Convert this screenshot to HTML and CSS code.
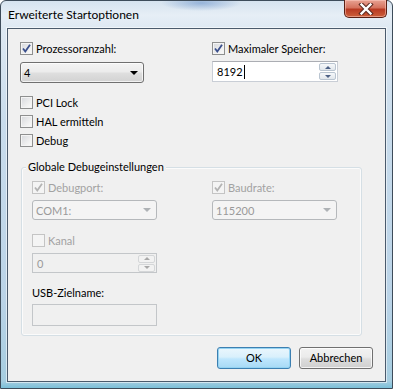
FILE: index.html
```html
<!DOCTYPE html>
<html lang="de">
<head>
    <meta charset="UTF-8">
    <title>Erweiterte Startoptionen</title>
    <link rel="stylesheet" href="styles.css">
</head>
<body>
    <div class="window">
        <div class="titlebar">
            <span class="title">Erweiterte Startoptionen</span>
            <div class="close-btn">
                <svg width="16" height="12" viewBox="0 0 16 12">
                    <path d="M3.5 1.5 L12.5 10.5 M12.5 1.5 L3.5 10.5" stroke="#5a2a22" stroke-width="4.4" stroke-linecap="square"/>
                    <path d="M3.5 1.5 L12.5 10.5 M12.5 1.5 L3.5 10.5" stroke="#ffffff" stroke-width="2.4" stroke-linecap="square"/>
                </svg>
            </div>
        </div>

        <div class="client">
            <div class="top-row">
                <div class="field">
                    <div class="check">
                        <span class="box"><svg width="11" height="11" viewBox="0 0 11 11"><path d="M2 5.5 L4.3 8.5 L9 1.8" class="tick"/></svg></span>
                        Prozessoranzahl:
                    </div>
                    <div class="combo">
                        <span>4</span>
                        <span class="arrow"></span>
                    </div>
                </div>
                <div class="field">
                    <div class="check">
                        <span class="box"><svg width="11" height="11" viewBox="0 0 11 11"><path d="M2 5.5 L4.3 8.5 L9 1.8" class="tick"/></svg></span>
                        Maximaler Speicher:
                    </div>
                    <div class="spin">
                        <span class="spin-text">8192<span class="caret"></span></span>
                        <div class="spin-btns">
                            <span class="spin-btn"><span class="up"></span></span>
                            <span class="spin-btn"><span class="down"></span></span>
                        </div>
                    </div>
                </div>
            </div>

            <div class="options">
                <div class="check"><span class="box"></span>PCI Lock</div>
                <div class="check"><span class="box"></span>HAL ermitteln</div>
                <div class="check"><span class="box"></span>Debug</div>
            </div>

            <div class="group">
                <span class="group-title">Globale Debugeinstellungen</span>
                <div class="group-grid">
                    <div class="field">
                        <div class="check disabled">
                            <span class="box"><svg width="11" height="11" viewBox="0 0 11 11"><path d="M2 5.5 L4.3 8.5 L9 1.8" class="tick"/></svg></span>
                            Debugport:
                        </div>
                        <div class="combo disabled">
                            <span>COM1:</span>
                            <span class="arrow"></span>
                        </div>
                    </div>
                    <div class="field">
                        <div class="check disabled">
                            <span class="box"><svg width="11" height="11" viewBox="0 0 11 11"><path d="M2 5.5 L4.3 8.5 L9 1.8" class="tick"/></svg></span>
                            Baudrate:
                        </div>
                        <div class="combo disabled">
                            <span>115200</span>
                            <span class="arrow"></span>
                        </div>
                    </div>
                    <div class="field kanal">
                        <div class="check disabled"><span class="box"></span>Kanal</div>
                        <div class="spin disabled">
                            <span class="spin-text">0</span>
                            <div class="spin-btns">
                                <span class="spin-btn"><span class="up"></span></span>
                                <span class="spin-btn"><span class="down"></span></span>
                            </div>
                        </div>
                    </div>
                    <div></div>
                    <div class="field usb">
                        <div class="label">USB-Zielname:</div>
                        <div class="textbox disabled"></div>
                    </div>
                </div>
            </div>

            <div class="buttons">
                <div class="btn default">OK</div>
                <div class="btn">Abbrechen</div>
            </div>
        </div>
    </div>
</body>
</html>
```

FILE: styles.css
```css
body {
    margin: 0;
    font-family: Lato, "Noto Sans", sans-serif;
    font-size: 11px;
    color: #000;
    background: #ffffff;
}

.window {
    width: 393px;
    height: 389px;
    box-sizing: border-box;
    border: 1px solid #3e4c5a;
    border-radius: 6px 6px 0 0;
    padding: 0 6px 6px;
    display: flex;
    flex-direction: column;
    background:
        radial-gradient(ellipse 40px 8px at 200px 2px, rgba(70, 120, 190, 0.45), transparent),
        linear-gradient(to bottom, #d6e3ef 0, #e6eef6 14px, #dde8f2 28px, #c9dcec 120px, #bad3e7 300px, #a6cde0 380px, #6fbcd6 389px);
}

.titlebar {
    height: 27px;
    display: flex;
    justify-content: space-between;
    align-items: flex-start;
}

.title {
    margin-top: 6px;
    margin-left: 1px;
    font-size: 12px;
    line-height: 15px;
    color: #000;
}

.close-btn {
    width: 43px;
    height: 18px;
    margin-top: -1px;
    margin-right: -1px;
    box-sizing: border-box;
    border: 1px solid #5a1f14;
    border-top: none;
    border-radius: 0 0 5px 5px;
    background: linear-gradient(to bottom, #e8a293 0, #d5735f 45%, #b83a23 55%, #cc5f3a 100%);
    box-shadow: inset 0 0 0 1px rgba(255, 210, 200, 0.5);
    display: flex;
    align-items: center;
    justify-content: center;
}

.client {
    flex: 1;
    border: 1px solid #4a5a6c;
    box-shadow: 0 0 0 1px rgba(255, 255, 255, 0.55);
    background: #f0f0f0;
    padding: 13px 12px 0 12px;
    display: flex;
    flex-direction: column;
}

.top-row {
    display: grid;
    grid-template-columns: 192px 1fr;
}

.check {
    display: flex;
    align-items: center;
    gap: 3px;
    height: 13px;
    line-height: 13px;
    white-space: nowrap;
}

.box {
    width: 13px;
    height: 13px;
    box-sizing: border-box;
    border: 1px solid #8e8f8f;
    background: linear-gradient(135deg, #d6d8dc 0, #f2f2f2 70%, #fbfbfb 100%);
    box-shadow: inset 0 0 0 1px #f4f4f4;
    display: flex;
    align-items: center;
    justify-content: center;
    flex: none;
}

.tick {
    fill: none;
    stroke: #3a4f8c;
    stroke-width: 1.8;
}

.check.disabled {
    color: #a2a2a2;
}

.check.disabled .box {
    border-color: #c4c4c4;
    background: #f4f4f4;
    box-shadow: none;
}

.check.disabled .tick {
    stroke: #b3b3b3;
}

.combo {
    margin-top: 7px;
    width: 124px;
    height: 21px;
    box-sizing: border-box;
    border: 1px solid #707070;
    border-radius: 3px;
    background: linear-gradient(to bottom, #f4f4f4 0, #ececec 45%, #dedede 55%, #d2d2d2 100%);
    box-shadow: inset 0 0 0 1px rgba(255, 255, 255, 0.7);
    padding: 0 5px 0 3px;
    display: flex;
    align-items: center;
    justify-content: space-between;
}

.arrow {
    width: 0;
    height: 0;
    border-left: 4px solid transparent;
    border-right: 4px solid transparent;
    border-top: 4px solid #000;
}

.combo.disabled {
    margin-top: 6px;
    height: 20px;
    width: 125px;
    border-color: #b5b8bb;
    background: #f4f4f4;
    box-shadow: none;
    color: #9a9a9a;
}

.combo.disabled .arrow {
    border-top-color: #aeb2b5;
}

.spin {
    margin-top: 6px;
    width: 126px;
    height: 21px;
    box-sizing: border-box;
    border: 1px solid #c9ced6;
    border-top-color: #abadb3;
    background: #ffffff;
    display: flex;
    align-items: center;
    justify-content: space-between;
    padding: 0 1px 0 4px;
}

.spin-text {
    display: flex;
    align-items: center;
}

.caret {
    width: 1px;
    height: 14px;
    background: #000;
    margin-left: 1px;
}

.spin-btns {
    width: 17px;
    height: 17px;
    display: flex;
    flex-direction: column;
    gap: 1px;
}

.spin-btn {
    flex: 1;
    border: 1px solid #b9c4d0;
    border-radius: 2px;
    background: linear-gradient(to bottom, #f6f8fa, #e2e7ec);
    display: flex;
    align-items: center;
    justify-content: center;
}

.up,
.down {
    width: 0;
    height: 0;
    border-left: 3px solid transparent;
    border-right: 3px solid transparent;
}

.up {
    border-bottom: 3px solid #4d6185;
}

.down {
    border-top: 3px solid #4d6185;
}

.spin.disabled {
    width: 125px;
    height: 20px;
    border-color: #c3c6c9;
    background: #f0f0f0;
    color: #9a9a9a;
}

.spin.disabled .spin-btn {
    border-color: #d4d6d8;
    background: #f2f2f2;
}

.spin.disabled .up {
    border-bottom-color: #a8a8a8;
}

.spin.disabled .down {
    border-top-color: #a8a8a8;
}

.options {
    margin-top: 13px;
    display: flex;
    flex-direction: column;
    gap: 6px;
}

.group {
    margin: 20px 11px 0 1px;
    border: 1px solid #d5dfe5;
    border-radius: 3px;
    box-shadow: inset 0 0 0 1px #fbfbfb;
    padding: 0 0 9px 10px;
    display: flex;
    flex-direction: column;
}

.group-title {
    align-self: flex-start;
    margin: -8px 0 0 -6px;
    padding: 0 2px;
    line-height: 14px;
    background: #f0f0f0;
}

.group-grid {
    margin-top: 7px;
    display: grid;
    grid-template-columns: 180px 1fr;
}

.kanal {
    margin-top: 14px;
}

.usb {
    margin-top: 13px;
}

.label {
    line-height: 14px;
}

.textbox {
    margin-top: 4px;
    width: 125px;
    height: 22px;
    box-sizing: border-box;
    border: 1px solid #c3c6c9;
    background: #f0f0f0;
}

.buttons {
    margin-top: 11px;
    display: flex;
    justify-content: flex-end;
    gap: 8px;
}

.btn {
    width: 74px;
    height: 22px;
    box-sizing: border-box;
    border: 1px solid #707070;
    border-radius: 3px;
    background: linear-gradient(to bottom, #f2f2f2 0, #ebebeb 45%, #dddddd 55%, #cfcfcf 100%);
    box-shadow: inset 0 0 0 1px rgba(255, 255, 255, 0.75);
    display: flex;
    align-items: center;
    justify-content: center;
    line-height: 14px;
}

.btn.default {
    border-color: #3c7fb1;
    background: linear-gradient(to bottom, #eaf6fd 0, #d9f0fc 45%, #bee6fd 55%, #a7d9f5 100%);
    box-shadow: inset 0 0 0 1px #94d3f2;
}
```
